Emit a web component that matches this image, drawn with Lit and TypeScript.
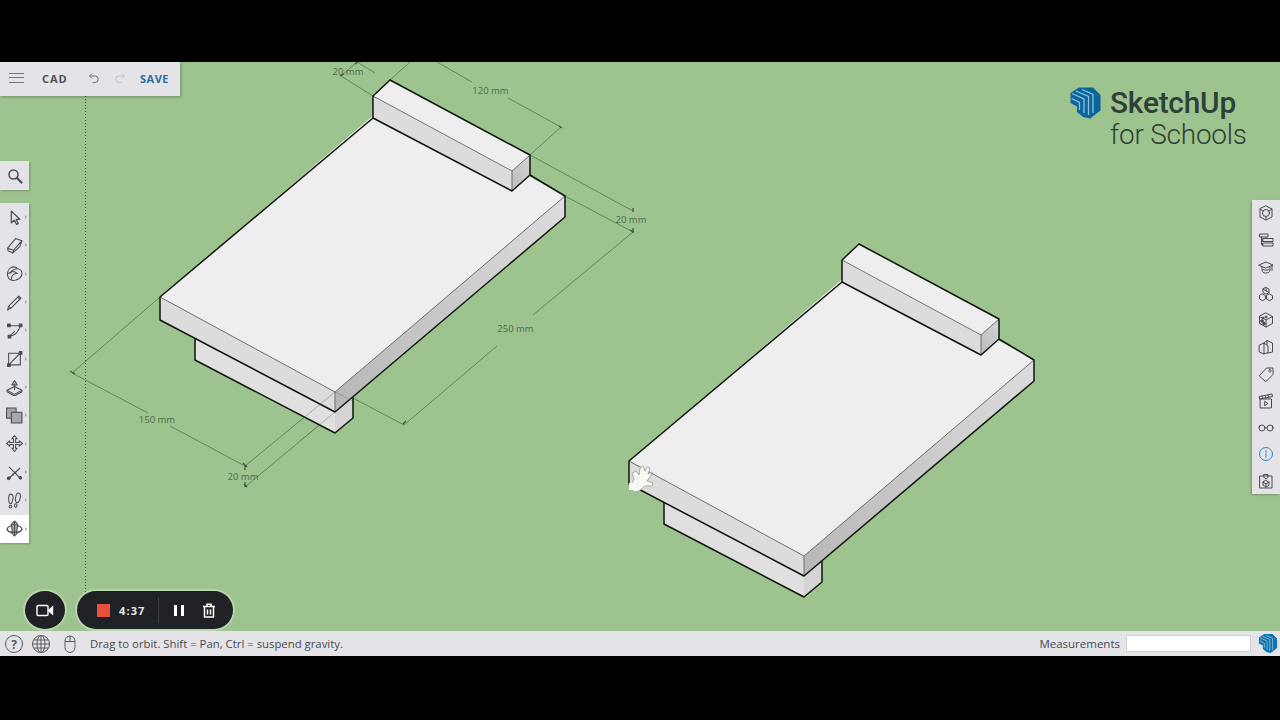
import { LitElement, html, css, svg } from "lit";
import { customElement } from "lit/decorators.js";

const leftTools = [
  svg`<path d="M5 2v11l2.800-2.400L10 14.500l1.600-.9-2.100-3.700 3.500-.3z" stroke-width="1.200"/>`,
  svg`<path d="M1.500 10.500 9 1.500 15 3.500 13 9 6.500 15 2 13zM1.500 10.500 7 12.500 6.500 15M7 12.500 15 3.500"/>`,
  svg`<path d="M2.500 12.500C.5 9.500 1 4.500 4.500 2.500 7.500 1 10 2 10.500 3.500 13 3.500 15 5.500 15 8S13 13 9.500 14C7 15 4.500 14.500 2.500 12.500zM2.500 8C5 5.500 8 5.500 10.500 8M5 13.500C5 10.500 7 8 9.500 8M10.500 3.500C8 3.500 5.500 5 4.500 7.500"/>`,
  svg`<path d="M1.500 15 2.500 11.500 12 2l2 2-9.500 9.500zM2.500 11.500l2 2M11 3l2 2"/>`,
  svg`<path d="M2 3.500h11.500M3 13.500C8 13 12 9 13.500 3.500M3 13.500 8 9"/><g class="fill"><rect x="1.500" y="2" width="2.500" height="2.500"/><rect x="12.500" y="2" width="2.500" height="2.500"/><rect x="2" y="12.500" width="2.500" height="2.500"/></g>`,
  svg`<path d="M2.500 3h11v11h-11zM2.500 14l11-11"/><g class="fill"><rect x="12.500" y="1.500" width="2.500" height="2.500"/><rect x="1.500" y="13" width="2.500" height="2.500"/></g>`,
  svg`<path d="M1 10.500 8 7l7 3.500L8 14.500zM1 10.500V12L8 16l7-4v-1.500"/><path class="soft" d="M8 10V4.500M5.500 5.500 8 1.500l2.500 4z"/>`,
  svg`<path class="shade" d="M.5 1h9v4h5.500v10H5v-4.500H.5z"/><path d="M5 10.500v-5.500h4.500"/>`,
  svg`<path d="M8 .5 10.500 3.500H9v3.500h3.500V5.500L15.500 8l-3 2.500V9H9v3.500h1.500L8 15.500l-2.500-3H7V9H3.500v1.500L.5 8l3-2.500V7H7V3.500H5.500z"/>`,
  svg`<path d="M2 14 13 4M3 3l11 11M3.500 12l1 1M6 9.500l1 1M8.500 7.500l1 1"/><g class="fill"><circle cx="2.500" cy="13.500" r="1.200"/><circle cx="13.500" cy="13" r="1.200"/></g>`,
  svg`<path d="M4.500 2C6.500 2 7 4 6.500 6.500S5.500 11 4.500 11 2.500 9 2.500 6.500 3 2 4.500 2zM4 12.500c1 0 1.500.5 1.500 1.300S5 15 4.200 15 3 14.500 3 13.800s.2-1.300 1-1.300zM11.500 1c1.500 0 2.500 1.500 2 4s-2 5-3 5-2-1.500-1.500-4.500S10 1 11.500 1zM9 11c1 0 1.500.7 1.300 1.700S9.500 14.500 8.700 14.300 7.800 13.200 8 12.300 8.300 11 9 11z"/>`,
  svg`<ellipse cx="8" cy="8.500" rx="7" ry="3.500"/><path class="shade" d="M5 4h6l-1 8H6z"/><path d="M8 1v14M5.500 3.500 8 1 10.500 3.500M5.500 12.500 8 15 10.500 12.500M1 8.500c0 4 14 4 14 0"/>`,
];

const rightTools = [
  svg`<path d="M8 1l6 3v8l-6 3-6-3V4z"/><circle cx="8" cy="8" r="3.500"/><path d="M2 4l3 2M14 4l-3 2M8 15v-3.500"/>`,
  svg`<path d="M2 2h8v3H2zM5 6.500h10v3H5zM5 11h10v3H5zM3.500 5v7.500H5M3.500 8H5"/>`,
  svg`<path d="M1 6l7-3 7 3-7 3zM4 8v3c0 2 1.500 3 4 3s4-1 4-3V8M5 10.500c2 1 4 1 6 0M14 6.500v5"/>`,
  svg`<path d="M8 1.500 11 3.200v3.300L8 8.200 5 6.500V3.200zM4.500 8 7.500 9.700V13L4.500 14.700 1.500 13V9.700zM11.500 8 14.500 9.700V13L11.500 14.700 8.500 13V9.700zM8 1.500v3.300l3 1.700M5 3.200l3 1.600"/>`,
  svg`<path d="M8 1l6.500 3.500v7L8 15l-6.500-3.500v-7zM1.500 4.500 8 8l6.500-3.500M8 8v7"/><g class="fill"><circle cx="4" cy="9" r="1.300"/><circle cx="6" cy="11.500" r="1.300"/><circle cx="5" cy="6" r=".9"/><circle cx="8" cy="5" r=".9"/></g>`,
  svg`<path d="M1.500 6 6 4v11l-4.500-2zM6 15l4-1.500V7L6 4M6 4l3-2.500L14.500 4v9L10 14M9 1.500V6"/>`,
  svg`<path d="M1.500 9.500 8.500 2H15v6.500L8 15.500zM12 3.700a1.200 1.200 0 1 1-.1 0z"/>`,
  svg`<path d="M2.500 6h11v9h-11zM1.500 3.500 14 1l.5 2.500L2 6zM4 3l1 2.500M7 2.500l1 2.500M10 2l1 2.500M7 8.500l3 2-3 2z"/>`,
  svg`<circle cx="4" cy="9" r="3"/><circle cx="12" cy="9" r="3"/><path d="M7 9c.6-.6 1.400-.6 2 0M1 8l1-1.500M15 8l-1-1.500"/>`,
  svg`<g class="blue"><circle cx="8" cy="8" r="6.500"/><path d="M8 7v4.500M8 4.500v1.200"/></g>`,
  svg`<path d="M2 3h12v12H2zM6 1.500h4v3L8 6 6 4.500zM8 7.500l3 1.700v3L8 14l-3-1.800v-3zM5 9.200l3 1.700 3-1.700M8 11v3"/>`,
];

@customElement("app-root")
export class AppRoot extends LitElement {
  static styles = css`
    :host { display: block; width: 1280px; height: 720px; background: #000; font-family: "Open Sans", "Liberation Sans", sans-serif; overflow: hidden; }
    .video { display: flex; flex-direction: column; height: 594px; padding-top: 62px; }
    .canvas { position: relative; flex: 1; background: #9dc48e; overflow: hidden; }
    .scene { display: block; width: 1280px; height: 569px; }
    .topbar { position: absolute; left: 0; top: 0; width: 180px; height: 34px; padding-bottom: 2px; box-sizing: border-box; background: #e4e4e8; box-shadow: 1px 1px 3px rgba(0,0,0,.28); display: flex; align-items: center; }
    .menu { width: 15px; height: 10px; margin-left: 9px; border-top: 1px solid #777; border-bottom: 1px solid #777; position: relative; box-sizing: border-box; }
    .menu::after { content: ""; position: absolute; left: 0; right: 0; top: 3px; border-top: 1px solid #777; }
    .cad { margin-left: 18px; font-size: 11px; font-weight: 700; letter-spacing: .9px; color: #505055; width: 26px; }
    .undo { margin-left: 20px; }
    .redo { margin-left: 14px; }
    .undo, .redo { width: 12px; height: 12px; fill: none; stroke-width: 1; }
    .undo { stroke: #777; }
    .redo { stroke: #c4c4c6; }
    .save { margin-left: 14px; font-size: 11px; font-weight: 700; letter-spacing: .5px; color: #2a6d9e; }
    .search, .ltools, .rtools { position: absolute; background: #e4e4e8; box-shadow: 1px 1px 2px rgba(0,0,0,.25); display: flex; flex-direction: column; }
    .search { left: 0; top: 99px; width: 29px; height: 29px; align-items: center; justify-content: center; }
    .ltools { left: 0; top: 141px; width: 29px; height: 340px; }
    .rtools { right: 0; top: 138px; width: 28px; height: 294px; box-sizing: border-box; box-shadow: -1px 1px 2px rgba(0,0,0,.25); }
    .tool { flex: 1; display: flex; align-items: center; justify-content: center; position: relative; }
    .ltools .tool { padding-right: 1px; }
    .tool.active { background: #fff; }
    .ltools .tool::after { content: ""; position: absolute; left: 25px; top: 50%; margin-top: -2px; border-left: 2px solid #a5a5a8; border-top: 2px solid transparent; border-bottom: 2px solid transparent; }
    .ico { width: 16px; height: 16px; fill: none; stroke: #4b4b50; stroke-width: 1; stroke-linejoin: round; stroke-linecap: round; }
    .ltools .ico { width: 17px; height: 17px; }
    .ico .fill { fill: #4b4b50; }
    .ico .soft { fill: #e4e4e8; }
    .ico .shade { fill: #a8a8ac; }
    .ico .blue { stroke: #2f86c5; }
    .logo { position: absolute; left: 1069px; top: 23px; display: flex; gap: 8px; color: #2e4038; }
    .mark { width: 33px; height: 34px; margin-top: 1px; }
    .brand { display: flex; flex-direction: column; font-family: Roboto, "Open Sans", sans-serif; line-height: 32px; padding-top: 2px; }
    .brand b { font-weight: 500; font-size: 29.800px; letter-spacing: -.2px; }
    .brand span { font-weight: 300; font-size: 27.900px; letter-spacing: -.2px; }
    .rec { position: absolute; left: 25px; top: 529px; display: flex; gap: 12px; }
    .cam, .pill { height: 38px; background: #202124; box-shadow: 0 0 0 2px rgba(214,232,206,.5); display: flex; align-items: center; box-sizing: border-box; }
    .cam { width: 40px; border-radius: 50%; justify-content: center; }
    .pill { width: 156px; border-radius: 19px; padding-left: 20px; }
    .stop { width: 13px; height: 13px; background: #ea4f3c; }
    .time { margin-left: 9px; width: 30px; font-size: 11px; font-weight: 700; letter-spacing: 1.100px; color: #e8e8e8; }
    .sep { width: 1px; height: 26px; background: #3c3d40; margin-left: 9px; }
    .pause { margin-left: 15px; width: 10px; height: 11px; border-left: 3px solid #fff; border-right: 3px solid #fff; box-sizing: border-box; }
    .trash { margin-left: 18px; width: 14px; height: 15px; fill: none; stroke: #fff; stroke-width: 1.500; }
    .camico { width: 18px; height: 13px; fill: none; stroke: #fff; stroke-width: 1.400; }
    .status { height: 25px; background: #e4e4e8; display: flex; align-items: center; font-size: 11.350px; color: #4a4a4e; }
    .sico { width: 20px; height: 20px; fill: none; stroke: #5a5a5e; stroke-width: 1; }
    .sico text { font: 700 12px "Open Sans", sans-serif; fill: #5a5a5e; stroke: none; text-anchor: middle; }
    .s1 { margin-left: 4px; }
    .s2 { margin-left: 7px; }
    .s3 { margin-left: 9px; }
    .msg { margin-left: 10px; flex: 1; }
    .mlabel { color: #3f4a5a; font-size: 11.500px; }
    .minput { width: 125px; height: 17px; margin-left: 6px; background: #fff; border: 1px solid #cfcfd2; box-sizing: border-box; }
    .smark { width: 20px; height: 21px; margin: 0 2px 0 7px; }
    .dim { stroke: #4d7a49; stroke-width: .8; fill: none; }
    .dot { stroke: #3a4a3a; stroke-width: 1; stroke-dasharray: 1 2; fill: none; }
    .tick { stroke: #35582f; stroke-width: 1.200; fill: none; }
    .lbl { font: 9.500px "Open Sans", sans-serif; fill: #4b6b49; text-anchor: middle; }
    .edge { stroke: #0c140c; stroke-width: 1.500; stroke-linejoin: round; fill: none; }
    .thin { stroke: #55585a; stroke-width: .8; fill: none; }
    .top { fill: #eeeeee; }
    .side { fill: #dcdcdc; }
    .lower { fill: #e0e0e0; }
  `;

  model(dx: number, dy: number) {
    return svg`<g transform="translate(${dx} ${dy})">
      <path class="lower" d="M195 339V360L335 433V412Z"/>
      <path fill="#d4d4d4" d="M335 412V433L353 418V397Z"/>
      <path class="edge" d="M195 339V360L335 433L353 418V397"/>
      <path class="top" d="M160 297L335 392L565 196L390 101Z"/>
      <path class="side" d="M160 297V320L335 412V392Z"/>
      <path fill="url(#rf)" d="M335 392V412L565 217V196Z"/>
      <path class="top" d="M373 96L390 80L530 155L512 171Z"/>
      <path class="side" d="M373 96V118L512 191V171Z"/>
      <path fill="url(#rb)" d="M512 171V191L530 175V155Z"/>
      <path class="thin" d="M160 297L335 392L565 196M335 392V412M373 96L512 171L530 155M512 171V191"/>
      <path class="edge" d="M373 118L160 297V320L335 412L565 217V196L530 175M373 118V96L390 80L530 155V175L512 191L373 118"/>
    </g>`;
  }

  logo(fill: string) {
    return svg`<path fill=${fill} d="M10 1.500 24 1.500 31.500 9V24.500L21 32.500 14 31 8 26V20.500L1.500 17V7Z"/>
      <path fill="none" stroke="#8fc0da" stroke-width="1.300" d="M3 7.500 15 13V27M7 5 19.500 10.500V29M13 3.500 24 8.500V27M2.500 12.500 10.500 16.500V24"/>`;
  }

  render() {
    return html`<div class="video">
      <div class="canvas">
        <svg class="scene" viewBox="0 62 1280 569">
          <defs>
            <linearGradient id="rf" x1="335" y1="400" x2="565" y2="205" gradientUnits="userSpaceOnUse"><stop offset="0" stop-color="#b8b8b8"/><stop offset="1" stop-color="#dcdcdc"/></linearGradient>
            <linearGradient id="rb" x1="512" y1="180" x2="530" y2="165" gradientUnits="userSpaceOnUse"><stop offset="0" stop-color="#c0c0c0"/><stop offset="1" stop-color="#d0d0d0"/></linearGradient>
          </defs>
          <path class="dot" d="M85.500 96V592"/>
          <path class="dim" d="M160 297L72 373L148 413M170 426L245 466L335 392M245 487L335 412M353 398L404 425L497 346M533 315L633 232L565 196M530 155L633 211M530 155L561 127L508 98M472 82L437 62M390 80L410 62M373 96L341 76L357 62M357 62L375 73"/>
          <path class="tick" d="M70 371l5 3M243 463l4 4M245 466v4M245 487v-5M244 484l3 3M403 424l3-3M630 230l4 2M633 208v4M633 228v5M559 126l3 2M340 76l4-2M355 64l3-2"/>
          ${this.model(0, 0)}
          <path class="dim" opacity=".55" d="M300 421L335 392M300 441L335 412M335 392L353 401"/>
          ${this.model(469, 164)}
          <text class="lbl" x="157" y="423">150 mm</text>
          <text class="lbl" x="243" y="480">20 mm</text>
          <text class="lbl" x="515.500" y="332">250 mm</text>
          <text class="lbl" x="631" y="223">20 mm</text>
          <text class="lbl" x="490.500" y="94">120 mm</text>
          <text class="lbl" x="348" y="75">20 mm</text>
          <path fill="#f6f8f2" stroke="#9a9a9a" stroke-width=".8" d="M630 488 634 479 632 473 636 471 639 475 640 468 643 466 645 471 647 467 650 468 648 474 652 472 651 476 647 481 653 483 652 486 645 486 639 491 634 492Z"/>
          <rect x="629" y="483" width="6" height="7" fill="#fbfdf6"/>
        </svg>

        <div class="topbar">
          <div class="menu"></div>
          <div class="cad">CAD</div>
          <svg class="undo" viewBox="0 0 12 12"><path d="M4 1.500 1.500 4 4 6.500M1.500 4H7a3 3 0 0 1 0 6.500H4.500"/></svg>
          <svg class="redo" viewBox="0 0 12 12"><path d="M8 1.500 10.500 4 8 6.500M10.500 4H5a3 3 0 0 0 0 6.500h2.500"/></svg>
          <div class="save">SAVE</div>
        </div>

        <div class="search"><svg class="ico" viewBox="0 0 16 16"><circle cx="6.500" cy="6.500" r="4.500" stroke-width="1.500"/><path d="M10 10l4.500 4.500" stroke-width="2.200"/></svg></div>

        <div class="ltools">
          ${leftTools.map((p, i) => html`<div class="tool ${i === 11 ? "active" : ""}"><svg class="ico" viewBox="0 0 16 16">${p}</svg></div>`)}
        </div>

        <div class="rtools">
          ${rightTools.map((p) => html`<div class="tool"><svg class="ico" viewBox="0 0 16 16">${p}</svg></div>`)}
        </div>

        <div class="logo">
          <svg class="mark" viewBox="0 0 33 34">${this.logo("#0a659f")}</svg>
          <div class="brand"><b>SketchUp</b><span>for Schools</span></div>
        </div>

        <div class="rec">
          <div class="cam"><svg class="camico" viewBox="0 0 18 13"><rect x="1" y="1.500" width="11" height="10" rx="1"/><path d="M12.500 6.500 16.500 3v7z" fill="#fff"/></svg></div>
          <div class="pill">
            <div class="stop"></div>
            <div class="time">4:37</div>
            <div class="sep"></div>
            <div class="pause"></div>
            <svg class="trash" viewBox="0 0 14 15"><path d="M1 3.500h12M5 3.500V1.200h4v2.300M2.500 3.500v10.500h9V3.500M5.500 6.500v5M8.500 6.500v5"/></svg>
          </div>
        </div>
      </div>

      <div class="status">
        <svg class="sico s1" viewBox="0 0 20 20"><circle cx="10" cy="10" r="8.500"/><text x="10" y="14.500">?</text></svg>
        <svg class="sico s2" viewBox="0 0 20 20"><circle cx="10" cy="10" r="8.500"/><ellipse cx="10" cy="10" rx="4" ry="8.500"/><path d="M1.500 10h17M2.700 6h14.600M2.700 14h14.600M10 1.500v17"/></svg>
        <svg class="sico s3" viewBox="0 0 20 20"><rect x="5" y="2" width="10" height="16.500" rx="5"/><path d="M5 7.500h10M10 2v5.500"/></svg>
        <div class="msg">Drag to orbit. Shift = Pan, Ctrl = suspend gravity.</div>
        <div class="mlabel">Measurements</div>
        <div class="minput"></div>
        <svg class="smark" viewBox="0 0 33 34">${this.logo("#1273ad")}</svg>
      </div>
    </div>`;
  }
}
